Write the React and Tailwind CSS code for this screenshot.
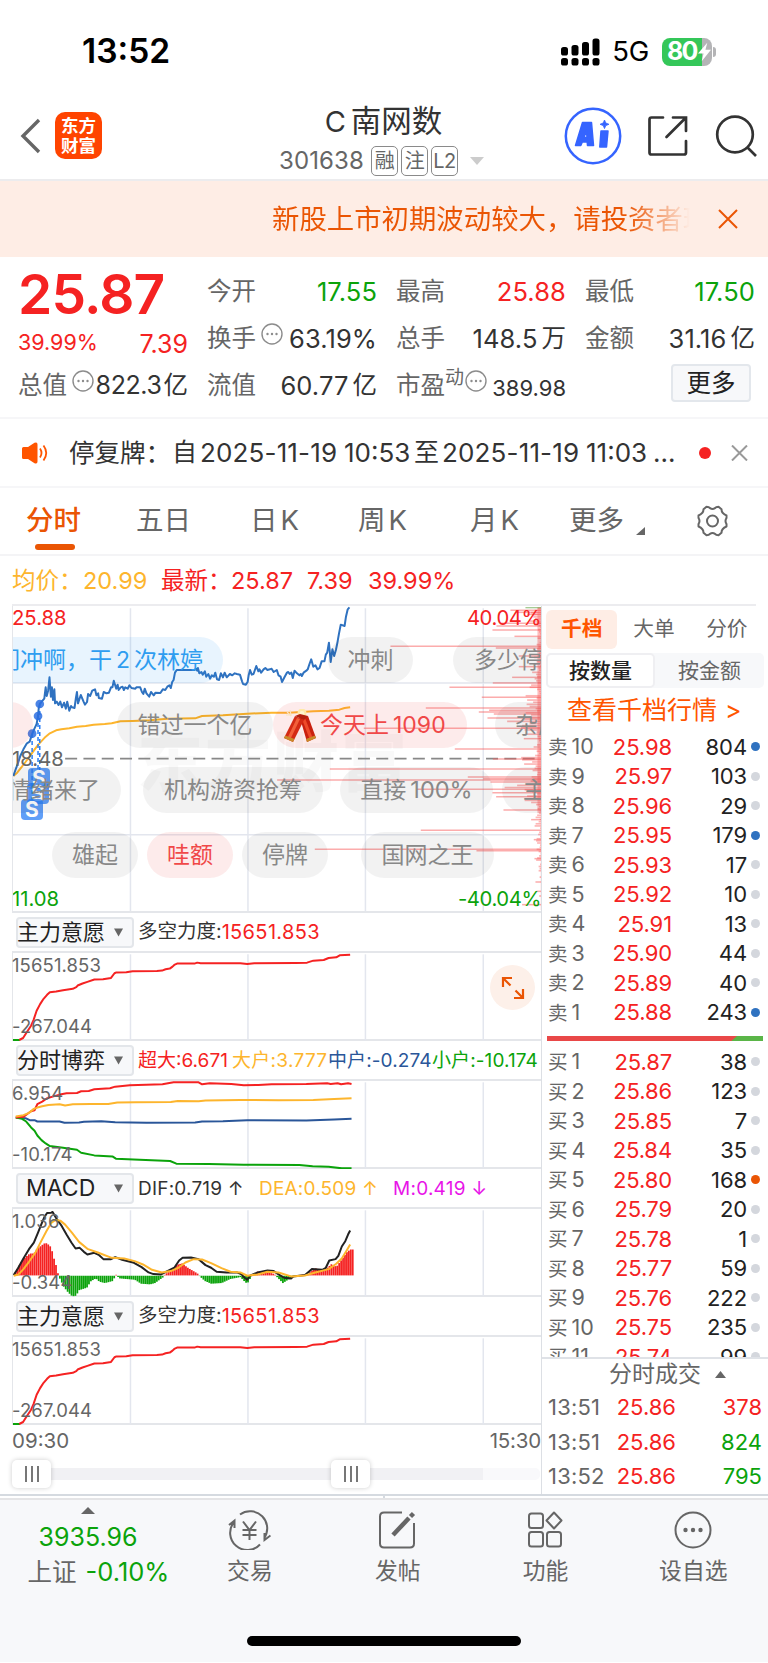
import React from "react";

const RED = "#f52222";
const GREEN = "#0ba30b";

/* ---------- chart data ---------- */
const PRICE =
  "37,528 43,510 50,490 57,468 66,448 76,430 84,425 91,402 98,385 104,372 108,348 110,325 113,312 121,302 126,296 130,262 133,288 137,272 141,232 145,290 148,262 151,300 155,268 157,310 162,305 167,315 172,305 177,322 183,308 188,326 192,305 198,332 203,318 206,322 213,324 217,294 220,276 223,310 231,285 239,305 243,314 249,306 252,282 258,288 264,272 272,268 276,286 281,280 283,294 292,296 297,276 305,280 312,278 318,262 322,262 326,242 333,266 337,254 340,270 346,262 351,260 355,270 359,262 366,266 371,256 377,264 388,266 391,262 402,262 407,276 411,282 415,266 420,280 428,290 433,276 441,286 446,278 460,279 467,268 474,270 480,260 486,256 490,264 494,246 498,240 502,218 507,210 558,210 562,206 566,212 568,204 572,220 578,216 582,224 588,214 592,230 598,222 603,236 608,226 614,230 618,218 623,238 629,240 634,220 640,232 645,218 651,232 660,222 667,226 674,220 680,222 689,224 695,244 698,252 706,254 711,246 714,226 718,210 723,224 728,222 736,198 742,214 745,208 750,218 757,208 762,204 768,210 775,208 780,206 786,216 795,210 800,226 806,230 810,246 817,232 824,218 828,216 832,222 837,218 841,234 846,212 853,220 860,226 864,222 867,228 872,218 880,212 884,208 889,192 894,178 900,200 906,196 912,208 918,204 924,184 932,184 936,164 940,158 945,128 950,186 955,148 960,168 965,150 969,130 974,100 979,74 990,78 994,50 999,28 1004,22";
const AVG =
  "37,528 48,518 60,502 72,486 86,466 100,446 112,430 130,410 142,400 160,391 175,388 198,385 220,380 245,378 268,374 300,372 320,370 345,364 380,363 430,361 480,356 560,355 580,348 640,346 710,341 780,338 830,338 900,334 945,332 975,329 990,324 1006,322";
const FORCE =
  "54,388 65,382 76,364 88,345 95,328 104,300 114,280 124,264 134,252 142,244 160,242 180,238 208,234 218,229 222,224 236,218 250,213 270,206 295,205 318,201 328,187 332,185 362,184 380,181 450,180 465,179 475,175 487,173 495,167 500,162 508,158 558,158 566,155 576,157 690,157 710,159 730,157 850,156 882,155 900,149 930,147 944,141 966,139 976,133 1006,131";
const G1 =
  "44,620 66,618 76,610 88,601 98,598 106,580 120,572 134,562 150,557 175,550 190,547 220,546 232,541 254,540 270,535 315,532 330,527 372,523 466,520 498,514 570,514 580,520 602,517 664,519 700,523 742,522 780,520 880,519 940,517 950,519 970,517 980,520 1000,517 1010,519";
const G2 =
  "44,617 66,613 82,606 96,594 106,590 120,586 138,582 170,580 186,584 208,580 260,579 310,579 336,575 390,574 490,573 510,570 570,571 590,569 690,567 800,568 900,567 960,564 1010,562";
const G3 =
  "44,620 72,622 84,628 98,628 106,632 170,632 184,636 226,635 240,633 290,631 330,634 420,636 560,635 580,632 640,631 710,628 880,629 960,626 1010,624";
const G4 =
  "44,620 62,624 74,632 88,650 98,660 106,674 118,688 130,698 142,706 180,711 220,717 232,726 270,734 322,737 332,744 400,747 488,751 506,759 600,760 700,762 860,763 898,767 944,768 982,773 1010,773";
const DIF =
  "38,312 50,292 66,262 82,234 96,214 108,184 118,158 126,138 134,125 146,124 150,122 160,140 176,164 190,190 204,214 216,232 228,230 240,242 250,250 270,245 284,252 296,264 318,264 330,258 350,266 384,275 406,288 426,304 440,309 462,310 480,300 500,290 514,268 524,260 548,259 570,264 590,282 606,290 622,302 650,304 680,304 694,310 700,318 710,326 718,314 740,304 768,298 786,300 800,310 816,320 836,322 842,316 876,312 896,294 926,296 936,290 946,268 964,264 972,254 982,226 992,210 1000,190 1006,178";
const DEA =
  "38,314 52,310 66,294 82,272 100,245 116,212 132,180 146,155 158,146 172,148 186,160 206,185 226,212 250,233 280,244 320,260 356,262 386,270 410,280 436,296 464,304 490,300 512,290 532,274 556,264 580,265 606,276 636,291 662,302 690,304 710,314 740,310 768,302 800,304 836,316 876,313 906,304 944,294 966,278 982,262 996,238 1006,220";
const HIST = [
  [38, 0], [50, 25], [66, 50], [84, 66], [96, 66], [106, 82], [118, 90], [124, 96], [133, 97], [146, 84], [150, 62], [158, 36], [163, 16], [166, 0],
  [172, -12], [182, -34], [194, -50], [206, -62], [218, -60], [224, -44], [248, -36], [260, -16], [274, -8], [284, -18], [300, -22], [322, -16], [332, 2],
  [342, -8], [386, -12], [404, -24], [430, -26], [444, -22], [468, -4], [473, 4], [490, 14], [506, 32], [522, 36], [540, 22], [566, 6], [573, -2], [588, -16],
  [606, -24], [636, -22], [660, -10], [690, -4], [704, -20], [710, -23], [722, -1], [740, 12], [768, 10], [788, 4], [796, -5], [812, -22], [830, -10], [850, 0],
  [884, 4], [904, 22], [930, 14], [952, 34], [966, 26], [980, 46], [996, 70], [1006, 78], [1013, 78],
];
const histAt = (x) => {
  for (let i = 1; i < HIST.length; i++) {
    const [x0, y0] = HIST[i - 1];
    const [x1, y1] = HIST[i];
    if (x <= x1) return y0 + ((y1 - y0) * (x - x0)) / (x1 - x0);
  }
  return 0;
};
const BARS = Array.from({ length: 175 }, (_, i) => 40 + i * 5.58).map((x) => [x, histAt(x + 2)]);

/* price distribution: [y, left edge], right edge is 845 */
const DIST = [
  [31, 750], [37, 770], [43, 800], [70, 722], [78, 708], [90, 696], [109, 762], [139, 390], [144, 706], [168, 775], [200, 775], [232, 755], [249, 697], [262, 567],
  [292, 664], [324, 496], [331, 686], [336, 655], [342, 700], [354, 681], [385, 310], [416, 790], [447, 583], [477, 697], [507, 208], [531, 622], [536, 668],
  [540, 50], [546, 690], [568, 470], [578, 696], [590, 707], [630, 729], [659, 812], [691, 481], [719, 820], [748, 163], [752, 648], [776, 822], [846, 825], [874, 828], [914, 785], [888, 836],
];
const FUZZ = [
  18, 30, 45, 40, 35, 28, 50, 22, 14, 8, 16, 12, 9, 6, 18, 6, 10, 22, 14, 20, 30, 12, 9, 32, 10, 22, 34, 8, 14, 12, 40, 24, 20, 30, 24, 18, 44, 50, 20, 12, 10, 66,
  22, 60, 36, 62, 50, 26, 20, 66, 44, 50, 72, 140, 50, 80, 84, 70, 22, 60, 18, 14, 12, 9, 20, 34, 10, 22, 12, 28, 84, 80, 40, 72, 26, 30, 38, 18, 20, 42, 34, 46,
  30, 100, 150, 70, 40, 20, 60, 30, 70, 44, 24, 12, 18, 10, 12, 20, 26, 10, 14, 26, 30, 8, 4, 12, 16, 8, 22, 24, 20, 8, 10, 22, 14, 6, 12, 20, 24, 3, 8, 14, 10, 14, 2, 3, 10,
].map((w, i) => [25 + i * 6.4, 845 - w * 0.75]);

const ASKS = [
  ["卖10", "25.98", "804", "b"], ["卖9", "25.97", "103"], ["卖8", "25.96", "29"], ["卖7", "25.95", "179", "b"], ["卖6", "25.93", "17"],
  ["卖5", "25.92", "10"], ["卖4", "25.91", "13"], ["卖3", "25.90", "44"], ["卖2", "25.89", "40"], ["卖1", "25.88", "243", "b"],
];
const BIDS = [
  ["买1", "25.87", "38"], ["买2", "25.86", "123"], ["买3", "25.85", "7"], ["买4", "25.84", "35"], ["买5", "25.80", "168", "o"], ["买6", "25.79", "20"],
  ["买7", "25.78", "1"], ["买8", "25.77", "59"], ["买9", "25.76", "222"], ["买10", "25.75", "235"], ["买11", "25.74", "99"],
];

/* ---------- header ---------- */
function StatusBar() {
  return (
    <div className="flex h-[103px] items-center pl-[82px] pr-[52px]">
      <span className="text-[33.500px] font-semibold leading-none text-black">13:52</span>
      <svg className="ml-auto" width="39" height="28" viewBox="0 0 39 28">
        {[0, 10.5, 21, 31.5].map((x, i) => (
          <g key={x}>
            <rect x={x} y={[9, 7, 4, 0.5][i]} width="7" height={[8.5, 10.5, 13.5, 17][i]} rx="2.6" />
            <rect x={x} y="20" width="7" height="7.5" rx="2.6" />
          </g>
        ))}
      </svg>
      <span className="ml-[12px] text-[27.500px] leading-none tracking-[-0.3px] text-black">5G</span>
      <div className="ml-[13px] flex items-center">
        <div className="flex h-[28px] w-[50px] items-center rounded-[8px] bg-gradient-to-r from-[#34c759] from-80% to-[#b4b4b6] to-80% pl-[5px]">
          <span className="text-[25px] font-bold leading-none tracking-[-1.8px] text-white">80</span>
          <svg className="ml-[1px] shrink-0" width="13" height="22" viewBox="0 0 14 22">
            <path d="M10 1 0 12.500h6L4 21 14 8.500H8Z" fill="#fff" />
          </svg>
        </div>
        <div className="ml-[1px] h-[10px] w-[3px] rounded-r-full bg-[#b4b4b6]" />
      </div>
    </div>
  );
}

function Badge({ children }) {
  return (
    <span className="flex h-[30px] w-[27px] items-center justify-center rounded-[5px] border border-[#8a8a8a] text-[20px] leading-none tracking-[-0.5px] text-[#666]">
      {children}
    </span>
  );
}

function NavBar() {
  return (
    <div className="flex h-[78px] border-b-2 border-[#ececee] pl-[20px]">
      <svg className="mt-[15px]" width="21" height="36" viewBox="0 0 21 36" fill="none" stroke="#666" strokeWidth="3.4">
        <path d="M19 2 3 18 19 34" />
      </svg>
      <div className="ml-[14px] mt-[9px] flex h-[47px] w-[47px] flex-col items-center justify-center rounded-[10px] bg-[#ff4400] text-[17.500px] font-bold leading-[20px] text-white">
        <span>东方</span>
        <span>财富</span>
      </div>
      <div className="ml-[177px] flex w-[209px] flex-col">
        <div className="flex h-[36px] items-center justify-center whitespace-nowrap text-[30.500px] leading-none text-[#333]">
          <span className="mr-[5px] text-[29px]">C</span>南网数
        </div>
        <div className="mt-[7px] flex h-[30px] items-center gap-[3px]">
          <span className="mr-[4px] w-[85px] whitespace-nowrap text-[24px] leading-none tracking-[0.1px] text-[#666]">301638</span>
          <Badge>融</Badge>
          <Badge>注</Badge>
          <Badge>L2</Badge>
          <svg className="ml-[9px] shrink-0" width="14" height="8" viewBox="0 0 14 8">
            <path d="M0 0H14L7 8Z" fill="#ccc" />
          </svg>
        </div>
      </div>
      <svg className="ml-[76px] mt-[4px]" width="58" height="58" viewBox="0 0 58 58">
        <circle cx="29" cy="29" r="27.2" fill="none" stroke="#3564ff" strokeWidth="2.5" />
        <g fill="#3564ff" stroke="#3564ff" strokeWidth="1.500" strokeLinejoin="round">
          <path fillRule="evenodd" d="M18.500 15.500H27.500L29.500 38.500H23.500L23.200 35H18.300L16.800 38.500H11.500ZM22.500 23.500 20 30.500H23Z" />
          <path d="M37 24H44L42.500 40H35.800Z" />
          <path d="M40.500 13 41.800 16 45 17.300 41.800 18.600 40.500 21.600 39.200 18.600 36 17.300 39.200 16Z" strokeWidth=".8" />
        </g>
      </svg>
      <svg className="ml-[25px] mt-[12px]" width="42" height="43" viewBox="0 0 42 43" fill="none" stroke="#333" strokeWidth="2.7" strokeLinecap="round">
        <path d="M16 2.500H4.500Q2.500 2.500 2.500 4.500V37.500Q2.500 39.500 4.500 39.500H37Q39 39.500 39 37.500V26M26 2.500H39V16M38.500 3 19.500 22" />
      </svg>
      <svg className="ml-[26px] mt-[12px]" width="42" height="43" viewBox="0 0 42 43" fill="none" stroke="#333" strokeWidth="2.7">
        <circle cx="20" cy="19.500" r="17.800" />
        <path d="M32 32 41 41" />
      </svg>
    </div>
  );
}

function Banner() {
  return (
    <div className="flex h-[76px] items-center bg-[#feede5] pl-[272px] pr-[30px]">
      <div className="w-[418px] overflow-hidden whitespace-nowrap bg-gradient-to-r from-[#ea5504] from-85% to-[#ea5504]/0 bg-clip-text text-[27.4px] leading-[40px] text-transparent">
        新股上市初期波动较大，请投资者理
      </div>
      <svg className="ml-auto" width="20" height="20" viewBox="0 0 20 20" stroke="#ea5504" strokeWidth="2">
        <path d="M1 1 19 19M19 1 1 19" />
      </svg>
    </div>
  );
}

/* ---------- quote ---------- */
function Dots() {
  return (
    <svg className="mt-[-10px] shrink-0" width="22" height="22" viewBox="0 0 22 22">
      <circle cx="11" cy="11" r="10" fill="none" stroke="#8c8c8c" strokeWidth="1.4" />
      <g fill="#8c8c8c">
        <circle cx="6.500" cy="11" r="1.200" />
        <circle cx="11" cy="11" r="1.200" />
        <circle cx="15.500" cy="11" r="1.200" />
      </g>
    </svg>
  );
}

function Cell({ label, value, unit, color = "text-[#333]", icon, sup, small, tight }) {
  const size = small ? "pt-[5px] text-[22px]" : tight ? "text-[25px] tracking-[-0.4px]" : "text-[25.500px] tracking-[0.1px]";
  return (
    <div className="flex h-[47px] w-[170px] items-center whitespace-nowrap leading-none">
      <span className="text-[24.5px] text-[#666]">{label}</span>
      {sup && <span className="mt-[-17px] text-[19px] text-[#666]">{sup}</span>}
      {icon && <span className={sup ? "ml-[1px] flex" : "ml-[5px] flex"}><Dots /></span>}
      <span className={`ml-auto flex items-center ${size} ${color}`}>
        {value}
        {unit && <span className={`text-[24.500px] tracking-normal ${tight ? "ml-[2px]" : "ml-[4px]"}`}>{unit}</span>}
      </span>
    </div>
  );
}

function Quote() {
  return (
    <div className="flex h-[162px] gap-[19px] border-b-2 border-[#f6f6f8] pl-[18px] pt-[11px]">
      <div className="w-[170px]">
        <div className="flex h-[56px] items-start pt-[4px]">
          <span className="text-[55px] font-semibold leading-[44px] tracking-[-0.800px] text-[#f52222]">25.87</span>
        </div>
        <div className="flex h-[38px] items-center justify-between leading-none text-[#f52222]">
          <span className="text-[21.500px]">39.99%</span>
          <span className="pt-[3px] text-[25px]">7.39</span>
        </div>
        <Cell label="总值" value="822.3" unit="亿" icon tight />
      </div>
      <div>
        <Cell label="今开" value="17.55" color="text-[#0ba30b]" />
        <Cell label="换手" value="63.19%" icon />
        <Cell label="流值" value="60.77" unit="亿" />
      </div>
      <div>
        <Cell label="最高" value="25.88" color="text-[#f52222]" />
        <Cell label="总手" value="148.5" unit="万" />
        <Cell label="市盈" sup="动" value="389.98" icon small />
      </div>
      <div>
        <Cell label="最低" value="17.50" color="text-[#0ba30b]" />
        <Cell label="金额" value="31.16" unit="亿" />
        <div className="ml-[86px] mt-[2px] flex h-[38px] w-[80px] items-center justify-center rounded-[4px] border-2 border-[#e3e7ec] bg-[#f7f8fa] text-[24.500px] leading-none text-[#222]">
          更多
        </div>
      </div>
    </div>
  );
}

function Notice() {
  return (
    <div className="flex h-[69px] items-center border-b-2 border-[#f6f6f8] pl-[22px] pr-[20px] leading-none">
      <svg width="26" height="22" viewBox="0 0 26 22">
        <path d="M0 6.500Q0 5 1.500 5H6L12.500 .8Q15.500-.5 15.500 2.500V19.500Q15.500 22.500 12.500 21.200L6 17H1.500Q0 17 0 15.500Z" fill="#ff5500" />
        <path d="M18 6.500Q21 11 18 15.500M21.500 3.500Q27 11 21.500 18.500" fill="none" stroke="#ff5500" strokeWidth="1.800" />
      </svg>
      <div className="ml-[21px] flex w-[620px] items-center whitespace-nowrap text-[26px] text-[#333]">
        <span className="w-[103px] text-[25.500px]">停复牌：</span>
        <span className="text-[25px]">自</span>
        <span className="ml-[3px] w-[144px] tracking-[0.15px]">2025-11-19</span>
        <span className="w-[70px]">10:53</span>
        <span className="text-[25px]">至</span>
        <span className="ml-[3px] w-[144px] tracking-[0.15px]">2025-11-19</span>
        <span className="w-[67px]">11:03</span>
        <span>...</span>
      </div>
      <span className="ml-auto h-[12px] w-[12px] shrink-0 rounded-full bg-[#f52222]" />
      <svg className="ml-[20px] shrink-0" width="17" height="16" viewBox="0 0 17 16" stroke="#999" strokeWidth="2">
        <path d="M1 .5 16 15.500M16 .5 1 15.500" />
      </svg>
    </div>
  );
}

function Tabs() {
  return (
    <div className="flex h-[68px] border-b-2 border-[#f4f4f6] pl-[26px] text-[27.500px] leading-none text-[#666]">
      <div className="flex w-[110px] flex-col text-[#ea5504]">
        <span className="mt-[19px] font-medium">分时</span>
        <span className="ml-[9px] mt-[9.500px] h-[6px] w-[40px] rounded-[3px] bg-[#ea5504]" />
      </div>
      <span className="mt-[19px] w-[114px]">五日</span>
      <span className="mt-[19px] w-[108px]">日<span className="ml-[3px] text-[27.500px]">K</span></span>
      <span className="mt-[19px] w-[112px]">周<span className="ml-[3px] text-[27.500px]">K</span></span>
      <span className="mt-[19px] w-[99px]">月<span className="ml-[3px] text-[27.500px]">K</span></span>
      <span className="mt-[19px] w-[67px]">更多</span>
      <svg className="mt-[39px]" width="9" height="8" viewBox="0 0 9 8">
        <path d="M9 0V8H0Z" fill="#666" />
      </svg>
      <svg className="ml-[51px] mt-[17px]" width="33" height="32" viewBox="0 0 33 32" fill="none" stroke="#666" strokeWidth="2">
        <path d="M10.500 1.800Q13 1.800 14 3.200 16.500 4.800 19 3.200 20 1.800 22.500 1.800L25.500 4.300Q25.500 8.500 30.500 10.500V13Q28.500 16 30.500 19V21.500Q25.500 23.500 25.500 27.700L22.500 30.200Q20 30.200 19 28.800 16.500 27.200 14 28.800 13 30.200 10.500 30.200L7.500 27.700Q7.500 23.500 2.500 21.500V19Q4.500 16 2.500 13V10.500Q7.500 8.500 7.500 4.300Z" strokeLinejoin="round" />
        <circle cx="16.500" cy="16" r="5.500" />
      </svg>
    </div>
  );
}

/* ---------- charts ---------- */
function Line({ d, c, w = 2 }) {
  return <polyline points={d} fill="none" stroke={c} strokeWidth={w} strokeLinejoin="round" vectorEffect="non-scaling-stroke" />;
}

function Plot({ top, height, className, children }) {
  return (
    <svg className={className} viewBox={`36 ${top} 1522 ${height}`} preserveAspectRatio="none">
      {[374, 712, 1050, 1389].map((x) => (
        <path key={x} d={`M${x} ${top + 7}V${top + height - 2}`} stroke="#e3e6ee" strokeWidth="1.500" vectorEffect="non-scaling-stroke" />
      ))}
      {children}
    </svg>
  );
}

const TONE = {
  gray: "bg-black/5 text-[#888]",
  red: "bg-[#f03c3c]/10 text-[#f04848]",
  blue: "bg-[#2196f3]/10 text-[#2f9df0]",
};
function Pill({ tone = "gray", className, children }) {
  return (
    <span className={`absolute flex h-[46px] items-center whitespace-nowrap rounded-full text-[23px] leading-none ${TONE[tone]} ${className}`}>
      {children}
    </span>
  );
}

function Firecracker() {
  return (
    <svg className="mr-[4px] mt-[2px] shrink-0" width="32" height="34" viewBox="0 0 32 34">
      <circle cx="18" cy="4" r="4.500" fill="#ffe9a8" />
      <circle cx="18" cy="4.500" r="2.400" fill="#fff6d0" />
      <path d="M3 3 7 7M6 1 7 6M2 6H8" stroke="#fbe3c0" strokeWidth="1.200" />
      <path d="M16 9 24 7 32 29 23 33Z" fill="#c9200f" />
      <path d="M18 10 21 9 29 30 26 31Z" fill="#ee4a2a" />
      <path d="M11 7 20 11 9 33 0 29Z" fill="#d42a14" />
      <path d="M13 9 16 10 6 31 3 30Z" fill="#f2603a" />
      <path d="M1.200 26.500 10.500 30 9 33 0 29ZM31 26.500 22 30 23 33 32 29Z" fill="#c98a2a" />
      <path d="M11 7 20 11 24 7 16 5Z" fill="#b3200f" />
    </svg>
  );
}

function Marker({ className }) {
  return (
    <span className={`absolute flex h-[21px] w-[22px] items-center justify-center rounded-[4px] bg-[#2b7ff5]/75 text-[21px] font-bold leading-none text-white ${className}`}>
      S
    </span>
  );
}

function MainChart() {
  return (
    <div className="relative h-[307px] overflow-hidden border-b-2 border-l border-[#e4e6ea] text-[20.300px] leading-none">
      <div className="absolute left-[124px] top-[123px] text-[66px] font-black tracking-[2px] text-black/[0.022]">东方财富</div>
      <Plot top={18} height={918} className="absolute left-0 top-0 h-[306px] w-[529px]">
        <path d="M36 249H1558M36 704H1558" stroke="#e3e6ee" strokeWidth="1.500" vectorEffect="non-scaling-stroke" />
        <path d="M186 476H1558" stroke="#888" strokeWidth="1.800" strokeDasharray="12 6.300" vectorEffect="non-scaling-stroke" />
        <Line d={AVG} c="#fdb52d" />
        <path d="M91 402V600M108 348V520M113 312V520" stroke="#2b7ff5" strokeWidth="1.500" strokeDasharray="4 3" vectorEffect="non-scaling-stroke" fill="none" />
        <Line d={PRICE} c="#2f72c0" />
        {[[91, 401], [108, 348], [113, 312]].map(([x, y]) => (
          <ellipse key={x} cx={x} cy={y} rx="12.500" ry="13" fill="#2b6fe0" fillOpacity=".85" />
        ))}
        <g transform="translate(748 0) scale(.959 1)">
          {FUZZ.map(([y, x]) => (
            <path key={y} d={`M${x} ${y}H845`} stroke="#fa5a5a" strokeOpacity=".45" strokeWidth="5" />
          ))}
          {DIST.map(([y, x]) => (
            <path key={y} d={`M${x} ${y}H845`} stroke="#fa5a5a" strokeOpacity=".5" strokeWidth="4.500" />
          ))}
          <path d="M838 22V640" stroke="#fa5a5a" strokeOpacity=".4" strokeWidth="14" />
          <path d="M843 640V930" stroke="#fa5a5a" strokeOpacity=".4" strokeWidth="4" />
          <path d="M795 23H845" stroke="#6aa84f" strokeOpacity=".6" strokeWidth="4" />
        </g>
      </Plot>
      <Marker className="left-[15px] top-[162px]" />
      <Marker className="left-[14px] top-[177px]" />
      <Marker className="left-[8px] top-[193px]" />

      <span className="absolute left-[-1px] top-[2px] text-[#f52222]">25.88</span>
      <span className="absolute right-0 top-[2px] tracking-[-0.4px] text-[#f52222]">40.04%</span>
      <span className="absolute left-[-1px] top-[143px] text-[#666]">18.48</span>
      <span className="absolute left-[-1px] top-[283px] text-[#0ba30b]">11.08</span>
      <span className="absolute right-0 top-[283px] tracking-[-0.4px] text-[#0ba30b]">-40.04%</span>

      <Pill tone="blue" className="left-[-80px] top-[31px] w-[290px] justify-end pr-[20px]">们冲啊，干<span className="mx-[4px]">2</span>次林婷</Pill>
      <Pill className="left-[315px] top-[31px] w-[85px] justify-center">冲刺</Pill>
      <Pill className="left-[440px] top-[31px] w-[150px] pl-[21px]">多少停牌</Pill>
      <Pill tone="red" className="left-[-60px] top-[96px] w-[80px]" />
      <Pill className="left-[104px] top-[96px] w-[156px] justify-center">错过一个亿</Pill>
      <Pill tone="red" className="left-[260px] top-[96px] w-[194px] pl-[11px]"><Firecracker />今天上<span className="ml-[4px]">1090</span></Pill>
      <Pill className="left-[482px] top-[96px] w-[150px] pl-[20px]">杂牌</Pill>
      <Pill className="left-[-60px] top-[161px] w-[168px] justify-end pr-[21px]">情绪来了</Pill>
      <Pill className="left-[130px] top-[161px] w-[180px] justify-center">机构游资抢筹</Pill>
      <Pill className="left-[327px] top-[161px] w-[153px] justify-center">直接<span className="ml-[4px] text-[23.500px]">100%</span></Pill>
      <Pill className="left-[489px] top-[161px] w-[150px] pl-[21px]">主力</Pill>
      <Pill className="left-[39px] top-[226px] w-[86px] justify-center">雄起</Pill>
      <Pill tone="red" className="left-[134px] top-[226px] w-[86px] justify-center">哇额</Pill>
      <Pill className="left-[229px] top-[226px] w-[86px] justify-center">停牌</Pill>
      <Pill className="left-[348px] top-[226px] w-[133px] justify-center">国网之王</Pill>
    </div>
  );
}

function Indicator({ name, legend, top, hi, lo, children, extra }) {
  return (
    <div>
      <div className="flex h-[38px] items-center pl-[4px] leading-none">
        <div className="flex h-[31px] w-[118px] items-center rounded-[4px] border-2 border-[#e3e6ea] bg-[#f7f8fa] text-[22px] text-[#222]">
          <span className={name === "MACD" ? "w-[96px] pl-[8px] text-[23px]" : "ml-[-1px] w-[97px] whitespace-nowrap"}>{name}</span>
          <svg width="9" height="9" viewBox="0 0 9 9">
            <path d="M0 .5H9L4.500 8.500Z" fill="#666" />
          </svg>
        </div>
        <div className="ml-[4px] flex items-center whitespace-nowrap text-[19px]">{legend}</div>
      </div>
      <div className="relative h-[90px] border-y-2 border-l border-[#e4e6ea] text-[18.500px] leading-none tracking-[0.1px] text-[#666]">
        <Plot top={top} height={268} className="absolute left-0 top-[-1px] h-[89px] w-[529px]">{children}</Plot>
        <span className="absolute left-[-1px] top-[3px]">{hi}</span>
        <span className="absolute left-[-1px] top-[64px]">{lo}</span>
        {extra}
      </div>
    </div>
  );
}

function ForceIndicator({ extra }) {
  return (
    <Indicator
      name="主力意愿"
      hi="15651.853"
      lo="-267.044"
      top={123}
      extra={extra}
      legend={<><span className="text-[19.500px] text-[#333]">多空力度:</span><span className="text-[20px] tracking-[0.35px] text-[#f52222]">15651.853</span></>}
    >
      <Line d="36,388 56,388" c={GREEN} />
      <Line d={FORCE} c={RED} />
    </Indicator>
  );
}

function Thumb() {
  return (
    <div className="z-10 flex h-[28px] w-[39px] shrink-0 items-center justify-center gap-[4px] rounded-[5px] bg-white shadow-[0_0_5px_rgba(0,0,0,0.2)]">
      <span className="h-[16px] w-[2px] bg-[#777]" />
      <span className="h-[16px] w-[2px] bg-[#777]" />
      <span className="h-[16px] w-[2px] bg-[#777]" />
    </div>
  );
}

function ChartColumn() {
  return (
    <div className="flex w-[542px] shrink-0 flex-col border-r border-[#dcdfe4] pl-[12px]">
      <MainChart />
      <ForceIndicator
        extra={
          <span className="absolute right-[6px] top-[12px] flex h-[45px] w-[45px] items-center justify-center rounded-full bg-[#fdf0e9]">
            <svg width="24" height="24" viewBox="0 0 24 24" fill="none" stroke="#ea5504" strokeWidth="2.200">
              <path d="M11 2H2V11M2 2 9.500 9.500M22 13V22H13M22 22 14.500 14.500" />
            </svg>
          </span>
        }
      />
      <Indicator
        name="分时博弈"
        hi="6.954"
        lo="-10.174"
        top={507}
        legend={
          <>
            <span className="w-[94px] text-[#f52222]">超大:6.671</span>
            <span className="w-[96px] tracking-[0.3px] text-[#fdb52d]">大户:3.777</span>
            <span className="w-[104px] tracking-[0.1px] text-[#2a5699]">中户:-0.274</span>
            <span className="tracking-[0.1px] text-[#0ba30b]">小户:-10.174</span>
          </>
        }
      >
        <Line d={G3} c="#2a5699" />
        <Line d={G4} c={GREEN} />
        <Line d={G1} c={RED} />
        <Line d={G2} c="#fdb52d" />
      </Indicator>
      <Indicator
        name="MACD"
        hi="1.036"
        lo="-0.344"
        top={110}
        legend={
          <>
            <span className="w-[121px] tracking-[0.2px] text-[#333]">DIF:0.719 ↑</span>
            <span className="w-[134px] tracking-[0.2px] text-[#fdb52d]">DEA:0.509 ↑</span>
            <span className="tracking-[0.25px] text-[#e815e8]">M:0.419 ↓</span>
          </>
        }
      >
        {BARS.map(([x, h]) => (
          <rect key={x} x={x} y={h > 0 ? 313 - h : 314} width="5.100" height={Math.abs(h)} fill={h > 0 ? RED : "#0ba30b"} />
        ))}
        <Line d={DIF} c="#222" />
        <Line d={DEA} c="#fdb52d" />
      </Indicator>
      <ForceIndicator />
      <div className="flex h-[32px] items-center justify-between text-[20.500px] leading-none text-[#666]">
        <span>09:30</span>
        <span className="tracking-[-0.2px]">15:30</span>
      </div>
      <div className="flex h-[33px] items-center">
        <Thumb />
        <div className="h-[12px] w-[280px] bg-[#f1f1f4]" />
        <Thumb />
        <div className="h-[12px] w-[113px] bg-[#f1f1f4]" />
        <div className="h-[12px] w-[57px] rounded-r-[5px] bg-[#f9f9fb]" />
      </div>
    </div>
  );
}

/* ---------- order book ---------- */
const DOT = { b: "bg-[#2f72c0]", o: "bg-[#ea5504]" };
function Row({ r }) {
  return (
    <div className="flex h-[29.500px] shrink-0 items-center leading-none">
      <span className="w-[60px] whitespace-nowrap text-[21.500px] text-[#666]"><span className="mr-[4px] text-[19.500px]">{r[0][0]}</span>{r[0].slice(1)}</span>
      <span className="w-[64px] text-right text-[22px] tracking-[-0.1px] text-[#f52222]">{r[1]}</span>
      <span className="w-[75px] text-right text-[22px] tracking-[-0.1px] text-[#222]">{r[2]}</span>
      <span className={`ml-[4px] h-[9px] w-[9px] rounded-full ${DOT[r[3]] || "bg-[#d4d7dd]"}`} />
    </div>
  );
}

function OrderBook() {
  return (
    <div className="flex flex-1 flex-col">
      <div className="ml-[4px] mt-[4px] flex h-[39px] w-[217px] items-center text-[20.700px] leading-none text-[#666]">
        <span className="flex h-[39px] w-[72px] items-center justify-center rounded-[6px] bg-[#feede5] font-bold text-[#ff5500]">千档</span>
        <span className="w-[74px] text-center">大单</span>
        <span className="w-[73px] text-center">分价</span>
      </div>
      <div className="ml-[4px] mt-[4px] flex h-[35px] w-[218px] rounded-[5px] bg-[#f7f8fa] text-[21px] leading-none">
        <span className="flex w-[109px] items-center justify-center rounded-[5px] border-2 border-[#efeff2] bg-white font-medium text-[#222]">按数量</span>
        <span className="flex flex-1 items-center justify-center text-[#666]">按金额</span>
      </div>
      <div className="flex h-[44px] items-center pl-[25px] pt-[1px] text-[25px] leading-none text-[#ff5500]">
        查看千档行情<span className="ml-[8px]">&gt;</span>
      </div>
      <div className="flex h-[295px] flex-col pl-[6px]">{ASKS.map((r) => <Row key={r[0]} r={r} />)}</div>
      <div className="ml-[5px] mt-[9px] flex h-[5px] w-[216px] bg-[#5ab548]">
        <span className="h-[5px] w-[190px] bg-[#e94848] [clip-path:polygon(0_0,100%_0,97%_100%,0_100%)]" />
      </div>
      <div className="mt-[6px] flex h-[312px] flex-col overflow-hidden border-b-2 border-[#dfe2e7] pl-[6px]">{BIDS.map((r) => <Row key={r[0]} r={r} />)}</div>
      <div className="flex h-[31px] items-center pl-[67px] text-[23px] leading-none text-[#666]">
        分时成交
        <svg className="ml-[14px]" width="11" height="7" viewBox="0 0 11 7">
          <path d="M5.500 0 11 7H0Z" fill="#666" />
        </svg>
      </div>
      {[["13:51", "378", "text-[#f52222]"], ["13:51", "824", "text-[#0ba30b]"], ["13:52", "795", "text-[#0ba30b]"]].map((t, i) => (
        <div key={i} className="flex h-[34.500px] items-center pl-[6px] text-[22px] leading-none">
          <span className="w-[60px] tracking-[0.2px] text-[#666]">{t[0]}</span>
          <span className="w-[68px] text-right text-[#f52222]">25.86</span>
          <span className={`w-[86px] text-right ${t[2]}`}>{t[1]}</span>
        </div>
      ))}
    </div>
  );
}

/* ---------- bottom navigation ---------- */
const ICONS = {
  trade: (
    <>
      <path d="M12 4.500A17.200 17.200 0 0 1 36 28.500M32 34.500A17.200 17.200 0 0 1 6 12M1 15 6.500 10.500V18M42.500 25.500 36.500 30V23" />
      <path d="M15 11.500 21.500 20 28 11.500M21.500 20V30M14.500 20H28.500M14.500 25H28.500" />
    </>
  ),
  post: (
    <>
      <path d="M26 2.500H8Q4 2.500 4 6.500V33.500Q4 37.500 8 37.500H34Q38 37.500 38 33.500V13" />
      <path d="M17 25 33 8" strokeWidth="4.500" />
      <path d="M34.500 6.500 37.500 3.500" strokeWidth="4.500" />
    </>
  ),
  grid: (
    <>
      <rect x="5" y="3.500" width="14" height="14.500" rx="2.500" />
      <rect x="5" y="22" width="14" height="14.500" rx="2.500" />
      <rect x="23" y="22" width="14" height="14.500" rx="2.500" />
      <path d="M30 2.500 37.500 10.500 30 18.500 22.500 10.500Z" strokeLinejoin="round" />
    </>
  ),
  more: (
    <>
      <circle cx="21" cy="20" r="17.500" />
      <g fill="#666" stroke="none">
        <circle cx="13.500" cy="20" r="2.200" />
        <circle cx="21" cy="20" r="2.200" />
        <circle cx="28.500" cy="20" r="2.200" />
      </g>
    </>
  ),
};
function NavItem({ icon, label }) {
  return (
    <div className="flex w-[147.800px] flex-col items-center">
      <svg className="mt-[10px]" width="43" height="40" viewBox="0 0 43 40" fill="none" stroke="#666" strokeWidth="2">
        {ICONS[icon]}
      </svg>
      <span className="mt-[10px] text-[22.800px] leading-none text-[#666]">{label}</span>
    </div>
  );
}

function BottomNav() {
  return (
    <div className="flex h-[162px] flex-col bg-[#f7f8fa]">
      <div className="flex h-[136px]">
        <div className="flex w-[176px] flex-col items-center whitespace-nowrap text-[25px] leading-none text-[#0ba30b]">
          <svg className="mt-[7px]" width="14" height="7" viewBox="0 0 14 7">
            <path d="M7 0 14 7H0Z" fill="#666" />
          </svg>
          <span className="mt-[11px]">3935.96</span>
          <span className="ml-[21px] mt-[9px] flex items-center text-[25.500px]"><span className="mr-[9px] text-[24.500px] text-[#666]">上证</span>-0.10%</span>
        </div>
        <NavItem icon="trade" label="交易" />
        <NavItem icon="post" label="发帖" />
        <NavItem icon="grid" label="功能" />
        <NavItem icon="more" label="设自选" />
      </div>
      <div className="mx-auto h-[10px] w-[274px] rounded-full bg-black" />
    </div>
  );
}

export default function App() {
  return (
    <div className="h-[1663px] w-[768px] overflow-hidden bg-white font-['Inter','Noto_Sans_CJK_SC',sans-serif]">
      <StatusBar />
      <NavBar />
      <Banner />
      <Quote />
      <Notice />
      <Tabs />
      <div className="flex h-[48px] items-center pl-[12px] pt-[1px] text-[23.500px] leading-none text-[#f52222]">
        <span className="w-[71px] whitespace-nowrap text-[#fdb52d]">均价：</span>
        <span className="w-[78px] text-[#fdb52d]">20.99</span>
        <span className="w-[70px] whitespace-nowrap">最新：</span>
        <span className="w-[76px]">25.87</span>
        <span className="w-[61px]">7.39</span>
        <span>39.99%</span>
      </div>
      <div className="ml-[12px] w-[744px] border-t-2 border-[#ececef]" />
      <div className="flex h-[888px]">
        <ChartColumn />
        <OrderBook />
      </div>
      <div className="h-[2px] bg-[#d5dae0]" />
      <div className="flex h-[4px] justify-center border-b-2 border-[#e4e4e6]">
        <span className="h-[2px] w-[2px] bg-[#d5dae0]" />
      </div>
      <BottomNav />
    </div>
  );
}
